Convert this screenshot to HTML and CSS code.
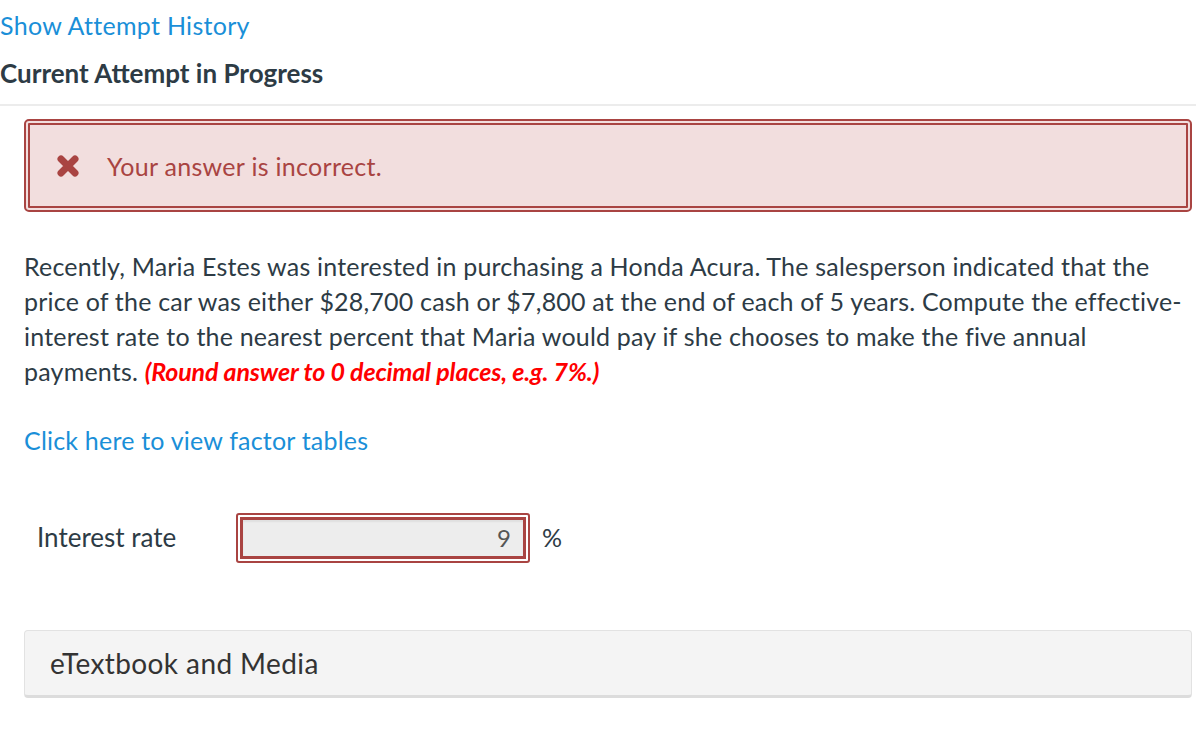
FILE: index.html
```html
<!DOCTYPE html>
<html>
<head>
<meta charset="utf-8">
<link rel="stylesheet" href="styles.css">
</head>
<body>
<div class="page">
  <div class="head">
    <a class="history" href="#">Show Attempt History</a>
    <h2 class="attempt">Current Attempt in Progress</h2>
  </div>
  <hr class="divider">
  <div class="question">
    <div class="feedback">
      <svg class="xicon" width="24" height="24" viewBox="0 0 24 24"><path d="M5 5 L19 19 M19 5 L5 19" stroke="#a94442" stroke-width="7" stroke-linecap="round" fill="none"/></svg>
      <span class="fb-text">Your answer is incorrect.</span>
    </div>
    <p class="prompt">Recently, Maria Estes was interested in purchasing a Honda Acura. The salesperson indicated that the price of the car was either $28,700 cash or $7,800 at the end of each of 5 years. Compute the effective-interest rate to the nearest percent that Maria would pay if she chooses to make the five annual payments. <span class="hint">(Round answer to 0 decimal places, e.g. 7%.)</span></p>
    <a class="factor" href="#">Click here to view factor tables</a>
    <div class="answer-row">
      <span class="label">Interest rate</span>
      <div class="input-wrap"><div class="input">9</div></div>
      <span class="unit">%</span>
    </div>
    <div class="media">eTextbook and Media</div>
  </div>
</div>
</body>
</html>
```
FILE: styles.css
```css
html, body { margin: 0; padding: 0; background: #fff; }
body { font-family: Lato, "Open Sans", sans-serif; color: #2d3b45; }
.page { width: 1196px; }
.head { padding-top: 10px; }
.history { display: block; color: #1a8fd8; text-decoration: none; font-size: 25px; letter-spacing: 0.3px; line-height: 30px; }
.attempt { margin: 18px 0 0 0; font-size: 26px; line-height: 30px; font-weight: 700; color: #2d3b45; }
.divider { margin: 16px 0 0 0; border: 0; border-top: 2px solid #ececec; height: 0; }
.question { padding: 0 4px 0 24px; }
.feedback { margin-top: 13px; height: 81px; border: 6px double #a94442; border-radius: 5px; background: #f2dede; display: flex; align-items: center; padding-left: 26px; }
.xicon { flex: none; margin-right: 27px; }
.fb-text { color: #a94442; font-size: 25px; letter-spacing: 0.3px; }
.prompt { margin: 37px 0 0 0; font-size: 25px; line-height: 35px; width: 1166px; letter-spacing: 0.2px; }
.hint { color: #ff0000; font-weight: 700; font-style: italic; letter-spacing: -0.15px; }
.factor { display: block; margin-top: 34px; color: #1a8fd8; text-decoration: none; font-size: 25px; line-height: 35px; letter-spacing: 0.2px; }
.answer-row { display: flex; align-items: center; margin-top: 55px; }
.label { font-size: 26px; width: 212px; padding-left: 13px; box-sizing: border-box; margin-bottom: 3px; }
.input-wrap { border: 2px solid #a94442; border-radius: 3px; padding: 2px; background: #fff; }
.input { width: 268px; height: 36px; border: 3px solid #a94442; background: #ededed; box-shadow: inset 0 2px 2px rgba(0,0,0,0.06); font-size: 24px; line-height: 36px; text-align: right; padding-right: 12px; color: #555; }
.unit { margin-left: 12px; font-size: 25px; margin-bottom: 2px; }
.media { margin-top: 67px; height: 64px; background: #f4f4f4; border: 1px solid #e2e2e2; border-bottom: 3px solid #dcdcdc; border-radius: 4px; display: flex; align-items: center; padding-left: 25px; font-size: 28px; letter-spacing: 0.4px; color: #333; }
```
